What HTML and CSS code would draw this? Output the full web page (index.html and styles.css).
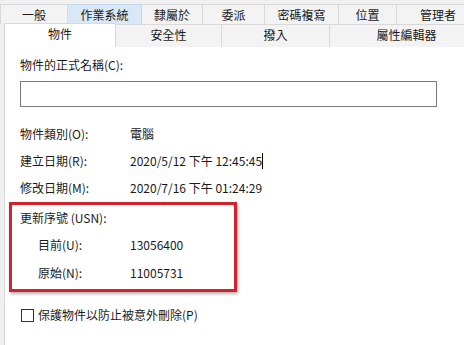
FILE: index.html
```html
<!DOCTYPE html>
<html lang="zh-Hant">
<head>
  <meta charset="UTF-8">
  <title>內容</title>
  <link rel="stylesheet" href="styles.css">
</head>
<body>
<div class="dialog">
  <div class="tabs row1">
    <div class="tab">一般</div>
    <div class="tab hover">作業系統</div>
    <div class="tab">隸屬於</div>
    <div class="tab">委派</div>
    <div class="tab">密碼複寫</div>
    <div class="tab">位置</div>
    <div class="tab">管理者</div>
  </div>
  <div class="tabs row2">
    <div class="tab active">物件</div>
    <div class="tab">安全性</div>
    <div class="tab">撥入</div>
    <div class="tab">屬性編輯器</div>
  </div>

  <div class="panel">
    <div class="label">物件的正式名稱(C):</div>
    <div class="textbox"></div>

    <div class="fields">
      <div class="field"><span>物件類別(O):</span><span>電腦</span></div>
      <div class="field"><span>建立日期(R):</span><span>2020/5/12 下午 12:45:45<i class="caret"></i></span></div>
      <div class="field"><span>修改日期(M):</span><span>2020/7/16 下午 01:24:29</span></div>
    </div>

    <div class="usn">
      <div class="usn-title">更新序號 (USN):</div>
      <div class="usn-row"><span>目前(U):</span><span>13056400</span></div>
      <div class="usn-row"><span>原始(N):</span><span>11005731</span></div>
    </div>

    <label class="check"><span class="box"></span>保護物件以防止被意外刪除(P)</label>
  </div>
</div>
</body>
</html>
```

FILE: styles.css
```css
body {
  margin: 0;
  font-family: "Noto Sans CJK TC", "Liberation Sans", sans-serif;
  font-size: 12px;
  color: #1a1a1a;
  background: #f0f0f0;
  width: 464px;
  height: 345px;
  overflow: hidden;
}
.dialog {
  padding-top: 4px;
  width: 480px;
}
.tabs {
  display: grid;
}
.row1 {
  grid-template-columns: 68px 74px 61px 62px 74px 58px 83px;
  height: 20px;
}
.row2 {
  grid-template-columns: 112px 106px 108px 154px;
  margin-left: 4px;
  height: 21px;
  position: relative;
  z-index: 1;
}
.tab {
  text-align: center;
  line-height: 19px;
  background: #f3f3f3;
  border: 1px solid #d9d9d9;
  border-left: none;
  border-bottom: none;
}
.row1 .tab:first-child {
  border-left: 1px solid #d9d9d9;
}
.row1 .tab.hover {
  background: #d9e8f7;
  border-color: #c3d9ef;
}
.row2 .tab {
  line-height: 20px;
}
.row2 .tab.active {
  background: #fff;
  border-left: 1px solid #d9d9d9;
  margin-top: -1px;
  height: 23px;
}
.panel {
  background: #fff;
  border: 1px solid #d9d9d9;
  margin-left: 4px;
  padding: 10px 0 0 15px;
  height: 300px;
}
.label {
  line-height: 18px;
}
.textbox {
  margin-top: 7px;
  width: 415px;
  height: 24px;
  border: 1px solid #7a7a7a;
  background: #fff;
}
.fields {
  margin-top: 13px;
}
.field {
  display: grid;
  grid-template-columns: 110px 1fr;
  line-height: 27px;
}
.caret {
  display: inline-block;
  width: 1px;
  height: 16px;
  background: #000;
  vertical-align: -3px;
}
.usn {
  margin: 1px 0 0 -11px;
  width: 214px;
  border: 3px solid #d0232b;
  padding: 0 0 2px 8px;
  box-shadow: 1px 2px 3px rgba(0, 0, 0, 0.3);
}
.usn-title {
  line-height: 26px;
}
.usn-row {
  display: grid;
  grid-template-columns: 92px 1fr;
  padding-left: 18px;
  line-height: 28px;
}
.check {
  display: flex;
  align-items: center;
  margin-top: 14px;
  line-height: 18px;
}
.box {
  width: 11px;
  height: 11px;
  border: 1px solid #333;
  margin: 0 4px 0 1px;
  background: #fff;
}
```
